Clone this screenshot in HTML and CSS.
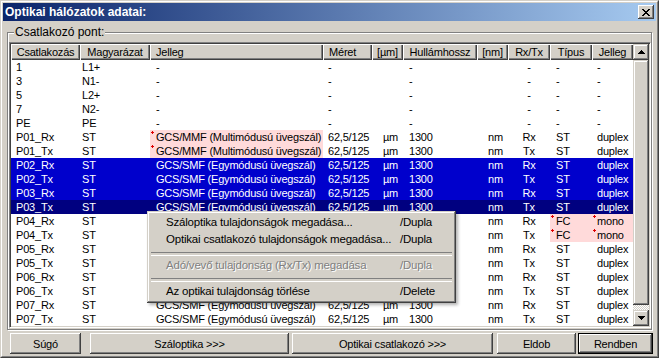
FILE: index.html
```html
<!DOCTYPE html>
<html lang="hu">
<head>
    <meta charset="UTF-8">
    <meta name="viewport" content="width=device-width, initial-scale=1.0">
    <title>Optikai hálózatok adatai</title>
    <link rel="stylesheet" href="styles.css">
</head>
<body>
    <div class="window">
        <div class="frame">
            <div class="titlebar">
                <span class="title">Optikai hálózatok adatai:</span>
                <button class="close-btn">
                    <svg width="8" height="7" viewBox="0 0 8 7" shape-rendering="crispEdges"><path fill="#000" d="M0 0h2v1h-2zM6 0h2v1h-2zM1 1h2v1h-2zM5 1h2v1h-2zM2 2h4v1h-4zM3 3h2v1h-2zM2 4h4v1h-4zM1 5h2v1h-2zM5 5h2v1h-2zM0 6h2v1h-2zM6 6h2v1h-2z"/></svg>
                </button>
            </div>

            <fieldset class="group">
                <legend>Csatlakozó pont:</legend>
                <div class="list">
                    <div class="grid-wrap">
                        <table class="grid">
                            <colgroup>
                                <col style="width:69px"><col style="width:70px"><col style="width:173px"><col style="width:49px"><col style="width:31px">
                                <col style="width:74px"><col style="width:31px"><col style="width:42px"><col style="width:42px"><col style="width:41px">
                            </colgroup>
                            <thead>
                                <tr>
                                    <th>Csatlakozás</th><th>Magyarázat</th><th>Jelleg</th><th>Méret</th><th>[µm]</th>
                                    <th>Hullámhossz</th><th>[nm]</th><th>Rx/Tx</th><th>Típus</th><th>Jelleg</th>
                                </tr>
                            </thead>
                            <tbody>
                                <tr><td>1</td><td>L1+</td><td>-</td><td>-</td><td></td><td>-</td><td></td><td>-</td><td>-</td><td>-</td></tr>
                                <tr><td>3</td><td>N1-</td><td>-</td><td>-</td><td></td><td>-</td><td></td><td>-</td><td>-</td><td>-</td></tr>
                                <tr><td>5</td><td>L2+</td><td>-</td><td>-</td><td></td><td>-</td><td></td><td>-</td><td>-</td><td>-</td></tr>
                                <tr><td>7</td><td>N2-</td><td>-</td><td>-</td><td></td><td>-</td><td></td><td>-</td><td>-</td><td>-</td></tr>
                                <tr><td>PE</td><td>PE</td><td>-</td><td>-</td><td></td><td>-</td><td></td><td>-</td><td>-</td><td>-</td></tr>
                                <tr><td>P01_Rx</td><td>ST</td><td class="flag">GCS/MMF (Multimódusú üvegszál)</td><td>62,5/125</td><td>µm</td><td>1300</td><td>nm</td><td>Rx</td><td>ST</td><td>duplex</td></tr>
                                <tr><td>P01_Tx</td><td>ST</td><td class="flag">GCS/MMF (Multimódusú üvegszál)</td><td>62,5/125</td><td>µm</td><td>1300</td><td>nm</td><td>Tx</td><td>ST</td><td>duplex</td></tr>
                                <tr class="sel"><td>P02_Rx</td><td>ST</td><td>GCS/SMF (Egymódusú üvegszál)</td><td>62,5/125</td><td>µm</td><td>1300</td><td>nm</td><td>Rx</td><td>ST</td><td>duplex</td></tr>
                                <tr class="sel"><td>P02_Tx</td><td>ST</td><td>GCS/SMF (Egymódusú üvegszál)</td><td>62,5/125</td><td>µm</td><td>1300</td><td>nm</td><td>Tx</td><td>ST</td><td>duplex</td></tr>
                                <tr class="sel"><td>P03_Rx</td><td>ST</td><td>GCS/SMF (Egymódusú üvegszál)</td><td>62,5/125</td><td>µm</td><td>1300</td><td>nm</td><td>Rx</td><td>ST</td><td>duplex</td></tr>
                                <tr class="sel focus"><td>P03_Tx</td><td>ST</td><td>GCS/SMF (Egymódusú üvegszál)</td><td>62,5/125</td><td>µm</td><td>1300</td><td>nm</td><td>Tx</td><td>ST</td><td>duplex</td></tr>
                                <tr><td>P04_Rx</td><td>ST</td><td>GCS/SMF (Egymódusú üvegszál)</td><td>62,5/125</td><td>µm</td><td>1300</td><td>nm</td><td>Rx</td><td class="flag">FC</td><td class="flag">mono</td></tr>
                                <tr><td>P04_Tx</td><td>ST</td><td>GCS/SMF (Egymódusú üvegszál)</td><td>62,5/125</td><td>µm</td><td>1300</td><td>nm</td><td>Tx</td><td class="flag">FC</td><td class="flag">mono</td></tr>
                                <tr><td>P05_Rx</td><td>ST</td><td>GCS/SMF (Egymódusú üvegszál)</td><td>62,5/125</td><td>µm</td><td>1300</td><td>nm</td><td>Rx</td><td>ST</td><td>duplex</td></tr>
                                <tr><td>P05_Tx</td><td>ST</td><td>GCS/SMF (Egymódusú üvegszál)</td><td>62,5/125</td><td>µm</td><td>1300</td><td>nm</td><td>Tx</td><td>ST</td><td>duplex</td></tr>
                                <tr><td>P06_Rx</td><td>ST</td><td>GCS/SMF (Egymódusú üvegszál)</td><td>62,5/125</td><td>µm</td><td>1300</td><td>nm</td><td>Rx</td><td>ST</td><td>duplex</td></tr>
                                <tr><td>P06_Tx</td><td>ST</td><td>GCS/SMF (Egymódusú üvegszál)</td><td>62,5/125</td><td>µm</td><td>1300</td><td>nm</td><td>Tx</td><td>ST</td><td>duplex</td></tr>
                                <tr><td>P07_Rx</td><td>ST</td><td>GCS/SMF (Egymódusú üvegszál)</td><td>62,5/125</td><td>µm</td><td>1300</td><td>nm</td><td>Rx</td><td>ST</td><td>duplex</td></tr>
                                <tr><td>P07_Tx</td><td>ST</td><td>GCS/SMF (Egymódusú üvegszál)</td><td>62,5/125</td><td>µm</td><td>1300</td><td>nm</td><td>Tx</td><td>ST</td><td>duplex</td></tr>
                            </tbody>
                        </table>
                    </div>
                    <div class="vscroll">
                        <div class="sb-btn">
                            <svg width="7" height="4" viewBox="0 0 7 4" shape-rendering="crispEdges"><path fill="#000" d="M3 0h1v1h-1zM2 1h3v1h-3zM1 2h5v1h-5zM0 3h7v1h-7z"/></svg>
                        </div>
                        <div class="sb-thumb"></div>
                        <div class="sb-track"></div>
                        <div class="sb-btn">
                            <svg width="7" height="4" viewBox="0 0 7 4" shape-rendering="crispEdges"><path fill="#000" d="M0 0h7v1h-7zM1 1h5v1h-5zM2 2h3v1h-3zM3 3h1v1h-1z"/></svg>
                        </div>
                    </div>
                </div>
            </fieldset>

            <div class="buttons">
                <button class="btn btn-help">Súgó</button>
                <button class="btn btn-fiber">Száloptika &gt;&gt;&gt;</button>
                <button class="btn btn-conn">Optikai csatlakozó &gt;&gt;&gt;</button>
                <button class="btn btn-cancel">Eldob</button>
                <button class="btn btn-ok">Rendben</button>
            </div>
        </div>
    </div>

    <!-- context menu over the list -->
    <div class="menu">
        <div class="menu-item"><span>Száloptika tulajdonságok megadása...</span><span>/Dupla</span></div>
        <div class="menu-item"><span>Optikai csatlakozó tulajdonságok megadása...</span><span>/Dupla</span></div>
        <div class="menu-sep"></div>
        <div class="menu-item disabled"><span>Adó/vevő tulajdonság (Rx/Tx) megadása</span><span>/Dupla</span></div>
        <div class="menu-sep"></div>
        <div class="menu-item"><span>Az optikai tulajdonság törlése</span><span>/Delete</span></div>
    </div>
</body>
</html>
```

FILE: styles.css
```css
* {
    margin: 0;
    padding: 0;
    box-sizing: border-box;
}

body {
    width: 659px;
    height: 358px;
    position: relative;
    overflow: hidden;
    background: #d4d0c8;
    font-family: "Liberation Sans", Arial, sans-serif;
    font-size: 11px;
    letter-spacing: -0.2px;
    color: #000;
}

button {
    font: inherit;
    font-weight: normal;
    letter-spacing: inherit;
    color: inherit;
    border: none;
}

.window {
    width: 659px;
    height: 358px;
    border: 1px solid;
    border-color: #d4d0c8 #404040 #404040 #d4d0c8;
}

.frame {
    height: 100%;
    border: 1px solid;
    border-color: #fff #808080 #808080 #fff;
    padding: 1px;
    display: flex;
    flex-direction: column;
}

/* title bar */
.titlebar {
    height: 18px;
    flex: none;
    display: flex;
    align-items: center;
    justify-content: space-between;
    padding: 0 2px 0 2px;
    background: linear-gradient(to right, #0a246a, #a6caf0);
}

.title {
    color: #fff;
    font-weight: bold;
    font-size: 12px;
    letter-spacing: 0;
}

.close-btn {
    width: 16px;
    height: 14px;
    display: flex;
    align-items: center;
    justify-content: center;
    background: #d4d0c8;
    box-shadow: inset -1px -1px #404040, inset 1px 1px #fff, inset -2px -2px #808080;
}

/* group box */
.group {
    flex: none;
    margin: 5px 4px 0 4px;
    padding: 3px 0 1px 1px;
    border: 1px solid #808080;
    box-shadow: 1px 1px 0 #fff, inset 1px 1px 0 #fff;
}

.group legend {
    margin-left: 5px;
    padding: 0 1px;
    font-size: 12px;
    letter-spacing: 0;
    line-height: 13px;
    background: #d4d0c8;
}

.list {
    height: 286px;
    display: flex;
    padding: 1px;
    background: #fff;
    border: 1px solid;
    border-color: #808080 #fff #fff #808080;
    box-shadow: inset 1px 1px #404040, inset -1px -1px #d4d0c8;
}

.grid-wrap {
    flex: 1;
    overflow: hidden;
}

.grid {
    width: 622px;
    table-layout: fixed;
    border-collapse: separate;
    border-spacing: 0;
}

.grid th {
    height: 16px;
    font-weight: normal;
    text-align: center;
    white-space: nowrap;
    overflow: hidden;
    background: #d4d0c8;
    box-shadow: inset 1px 1px #fff, inset -1px -1px #404040, inset -2px -2px #808080;
}

.grid th:nth-child(3),
.grid th:nth-child(4) {
    text-align: left;
    padding-left: 6px;
}

.grid td {
    height: 14px;
    line-height: 14px;
    white-space: nowrap;
    overflow: hidden;
    padding: 0;
}

.grid td:nth-child(1) { padding-left: 5px; }
.grid td:nth-child(2) { padding-left: 2px; }
.grid td:nth-child(3) { padding-left: 6px; }
.grid td:nth-child(4) { padding-left: 5px; }
.grid td:nth-child(5) { text-align: right; padding-right: 5px; }
.grid td:nth-child(6) { padding-left: 6px; }
.grid td:nth-child(7) { text-align: right; padding-right: 5px; }
.grid td:nth-child(8) { text-align: center; }
.grid td:nth-child(9) { padding-left: 6px; }
.grid td:nth-child(10) { padding-left: 5px; }

.grid tr.sel td {
    background: #0000cc;
    color: #fff;
}

.grid tr.sel.focus td {
    background: #000080;
}

.grid td.flag {
    position: relative;
    background: #ffdada;
}

/* small red marker in the corner */
.grid td.flag::before {
    content: '';
    position: absolute;
    left: 1px;
    top: 1px;
    width: 3px;
    height: 3px;
    background:
        linear-gradient(#e00000, #e00000) center / 3px 1px no-repeat,
        linear-gradient(#e00000, #e00000) center / 1px 3px no-repeat;
}

/* scrollbar */
.vscroll {
    width: 16px;
    display: flex;
    flex-direction: column;
}

.sb-btn,
.sb-thumb {
    background: #d4d0c8;
    box-shadow: inset -1px -1px #404040, inset 1px 1px #d4d0c8, inset -2px -2px #808080, inset 2px 2px #fff;
}

.sb-btn {
    height: 16px;
    display: flex;
    align-items: center;
    justify-content: center;
}

.sb-thumb {
    height: 245px;
}

.sb-track {
    flex: 1;
    background: repeating-conic-gradient(#fff 0 25%, #d4d0c8 0 50%) 0 0 / 2px 2px;
}

/* bottom buttons */
.buttons {
    flex: none;
    display: flex;
    height: 21px;
    margin-top: 3px;
    padding-left: 7px;
}

.btn {
    height: 21px;
    background: #d4d0c8;
    text-align: center;
    box-shadow: inset -1px -1px #404040, inset 1px 1px #fff, inset -2px -2px #808080;
}

.btn-help { width: 71px; }
.btn-fiber { width: 199px; margin-left: 9px; }
.btn-conn { width: 201px; margin-left: 3px; }
.btn-cancel { width: 79px; margin-left: 4px; }

.btn-ok {
    width: 75px;
    margin-left: 2px;
    border: 1px solid #000;
}

/* context menu */
.menu {
    position: absolute;
    left: 147px;
    top: 211px;
    width: 309px;
    padding: 3px;
    font-size: 11.5px;
    letter-spacing: -0.2px;
    background: #d4d0c8;
    box-shadow: inset -1px -1px #404040, inset 1px 1px #d4d0c8, inset -2px -2px #808080, inset 2px 2px #fff,
        2px 2px 3px rgba(0, 0, 0, 0.3);
}

.menu-item {
    height: 17px;
    line-height: 17px;
    display: grid;
    grid-template-columns: 234px auto;
    padding-left: 16px;
    white-space: nowrap;
}

.menu-item.disabled {
    color: #808080;
    text-shadow: 1px 1px 0 #fff;
}

.menu-sep {
    height: 9px;
    padding: 4px 1px 0;
}

.menu-sep::before {
    content: '';
    display: block;
    height: 2px;
    border-top: 1px solid #808080;
    border-bottom: 1px solid #fff;
}
```
